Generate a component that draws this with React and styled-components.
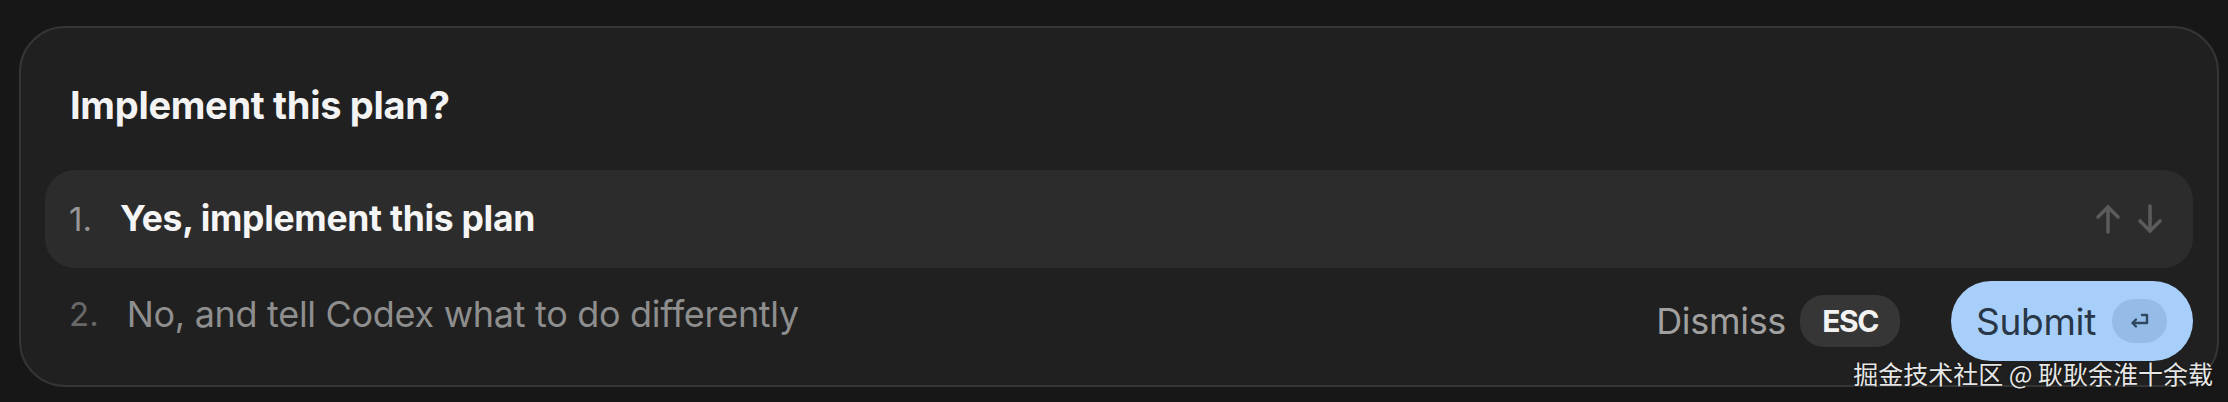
import React from 'react';
import styled, { createGlobalStyle } from 'styled-components';

const GlobalStyle = createGlobalStyle`
  html, body {
    margin: 0;
    padding: 0;
    background: #171717;
  }
  * {
    box-sizing: border-box;
  }
`;

const Page = styled.div`
  position: relative;
  width: 2228px;
  height: 402px;
  padding: 26px 9px 0 19px;
  background: #171717;
  font-family: Inter, "Noto Sans", sans-serif;
`;

const Card = styled.section`
  width: 2200px;
  height: 361px;
  padding: 54px 24px 0 24px;
  background: #202020;
  border: 2px solid #353535;
  border-radius: 46px;
`;

const Title = styled.h1`
  margin: 0 0 42px 25px;
  font-size: 38px;
  line-height: 46px;
  font-weight: 700;
  color: #f3f3f3;
  letter-spacing: -0.3px;
`;

const Options = styled.div`
  display: flex;
  flex-direction: column;
`;

const OptionRow = styled.div`
  display: flex;
  align-items: center;
  gap: ${p => (p.$active ? '28px' : '28px')};
  height: ${p => (p.$active ? '98px' : 'auto')};
  padding: 0 30px 0 24px;
  border-radius: 30px;
  background: ${p => (p.$active ? '#2c2c2c' : 'transparent')};
`;

const Num = styled.span`
  font-size: 33px;
  line-height: 44px;
  color: ${p => (p.$active ? '#969696' : '#686868')};
`;

const Label = styled.span`
  font-size: ${p => (p.$active ? '35.5px' : '36px')};
  line-height: 44px;
  font-weight: ${p => (p.$active ? 700 : 400)};
  color: ${p => (p.$active ? '#f5f5f5' : '#8e8e8e')};
  letter-spacing: -0.3px;
`;

const Arrows = styled.div`
  display: flex;
  align-items: center;
  gap: 16px;
  margin-left: auto;
  color: #5b5b5b;
`;

const Footer = styled.div`
  display: flex;
  align-items: center;
  margin-top: 13px;
  height: 80px;
`;

const SecondOption = styled(OptionRow)`
  margin-bottom: 14px;
`;

const Actions = styled.div`
  display: flex;
  align-items: center;
  margin-left: auto;
`;

const Dismiss = styled.span`
  font-size: 36px;
  line-height: 44px;
  color: #a0a0a0;
  letter-spacing: -0.3px;
`;

const Kbd = styled.span`
  display: flex;
  align-items: center;
  justify-content: center;
  width: 100px;
  height: 52px;
  margin: 0 51px 0 14px;
  border-radius: 24px;
  background: #363636;
  color: #f2f2f2;
  font-size: 30px;
  font-weight: 700;
  letter-spacing: -1.5px;
`;

const SubmitButton = styled.button`
  display: flex;
  align-items: center;
  gap: 16px;
  height: 80px;
  padding: 0 26px 0 25px;
  border: none;
  border-radius: 40px;
  background: #a7cffa;
  color: #283646;
  font-family: Inter, "Noto Sans", sans-serif;
  font-size: 37px;
  letter-spacing: -0.3px;
`;

const EnterKey = styled.span`
  display: flex;
  align-items: center;
  justify-content: center;
  width: 55px;
  height: 44px;
  border-radius: 22px;
  background: #94bce6;
  color: #2f4860;
`;

const Watermark = styled.div`
  position: absolute;
  right: 15px;
  top: 357px;
  font-family: "Noto Sans CJK SC", "Noto Sans", sans-serif;
  font-size: 25px;
  line-height: 32px;
  color: #e6e6e6;
  text-shadow: 0 0 2px rgba(0, 0, 0, 0.8);
`;

const ArrowIcon = ({ down }) => (
  <svg width="26" height="30" viewBox="0 0 26 30" fill="none" stroke="currentColor"
    strokeWidth="3.6" strokeLinecap="round" strokeLinejoin="round">
    {down ? (
      <>
        <path d="M13 2 V27" />
        <path d="M3 17 L13 27 L23 17" />
      </>
    ) : (
      <>
        <path d="M13 28 V3" />
        <path d="M3 13 L13 3 L23 13" />
      </>
    )}
  </svg>
);

const ReturnIcon = () => (
  <svg width="22" height="16" viewBox="0 0 22 16" fill="none" stroke="currentColor"
    strokeWidth="2.4" strokeLinecap="round" strokeLinejoin="round">
    <path d="M13 2 H18 V10 H4" />
    <path d="M7 6.5 L3.5 10 L7 13.5" />
  </svg>
);

export default function App() {
  return (
    <>
      <GlobalStyle />
      <Page>
        <Card>
          <Title>Implement this plan?</Title>
          <Options>
            <OptionRow $active>
              <Num $active>1.</Num>
              <Label $active>Yes, implement this plan</Label>
              <Arrows>
                <ArrowIcon />
                <ArrowIcon down />
              </Arrows>
            </OptionRow>
            <Footer>
              <SecondOption>
                <Num>2.</Num>
                <Label>No, and tell Codex what to do differently</Label>
              </SecondOption>
              <Actions>
                <Dismiss>Dismiss</Dismiss>
                <Kbd>ESC</Kbd>
                <SubmitButton>
                  Submit
                  <EnterKey>
                    <ReturnIcon />
                  </EnterKey>
                </SubmitButton>
              </Actions>
            </Footer>
          </Options>
        </Card>
        <Watermark>掘金技术社区 @ 耿耿余淮十余载</Watermark>
      </Page>
    </>
  );
}
